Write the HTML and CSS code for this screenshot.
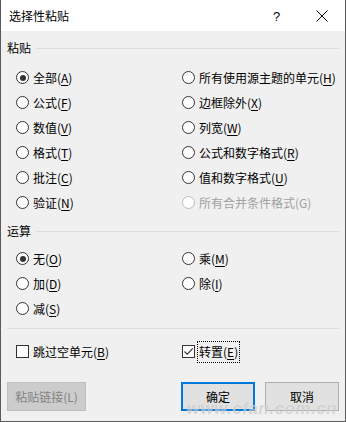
FILE: index.html
```html
<!DOCTYPE html>
<html lang="zh-CN">
<head>
<meta charset="utf-8">
<title>选择性粘贴</title>
<link rel="stylesheet" href="styles.css">
</head>
<body>
<div class="dialog">
  <div class="titlebar">
    <span class="title">选择性粘贴</span>
    <span class="help">?</span>
    <span class="close"><svg width="12" height="12" viewBox="0 0 12 12"><path d="M0.5 0.5 L11.5 11.5 M11.5 0.5 L0.5 11.5" stroke="#000" stroke-width="1" fill="none"/></svg></span>
  </div>
  <div class="content">
    <div class="group-head"><span>粘贴</span><i class="rule"></i></div>
    <div class="opts paste">
      <label class="opt"><span class="radio on"></span>全部(<u>A</u>)</label>
      <label class="opt"><span class="radio"></span>所有使用源主题的单元(<u>H</u>)</label>
      <label class="opt"><span class="radio"></span>公式(<u>F</u>)</label>
      <label class="opt"><span class="radio"></span>边框除外(<u>X</u>)</label>
      <label class="opt"><span class="radio"></span>数值(<u>V</u>)</label>
      <label class="opt"><span class="radio"></span>列宽(<u>W</u>)</label>
      <label class="opt"><span class="radio"></span>格式(<u>T</u>)</label>
      <label class="opt"><span class="radio"></span>公式和数字格式(<u>R</u>)</label>
      <label class="opt"><span class="radio"></span>批注(<u>C</u>)</label>
      <label class="opt"><span class="radio"></span>值和数字格式(<u>U</u>)</label>
      <label class="opt"><span class="radio"></span>验证(<u>N</u>)</label>
      <label class="opt disabled"><span class="radio"></span>所有合并条件格式(G)</label>
    </div>
    <div class="group-head op-head"><span>运算</span><i class="rule"></i></div>
    <div class="opts ops">
      <label class="opt"><span class="radio on"></span>无(<u>O</u>)</label>
      <label class="opt"><span class="radio"></span>乘(<u>M</u>)</label>
      <label class="opt"><span class="radio"></span>加(<u>D</u>)</label>
      <label class="opt"><span class="radio"></span>除(<u>I</u>)</label>
      <label class="opt"><span class="radio"></span>减(<u>S</u>)</label>
    </div>
    <div class="sep"></div>
    <div class="opts checks">
      <label class="opt"><span class="check"></span>跳过空单元(<u>B</u>)</label>
      <label class="opt"><span class="check tight"><svg width="11" height="11" viewBox="0 0 11 11"><path d="M1.5 5.5 L4.2 8.2 L9.8 2.4" stroke="#333" stroke-width="1.1" fill="none"/></svg></span><span class="focus">转置(<u>E</u>)</span></label>
    </div>
    <div class="footer">
      <button class="btn link" disabled>粘贴链接(L)</button>
      <span class="spacer"></span>
      <button class="btn ok">确定</button>
      <button class="btn cancel">取消</button>
    </div>
  </div>
  <div class="watermark">www.cfan.com.cn</div>
</div>
</body>
</html>
```
FILE: styles.css
```css
* { box-sizing: border-box; }
html, body { margin: 0; padding: 0; }
body {
  width: 346px;
  height: 422px;
  overflow: hidden;
  font-family: "Noto Sans CJK SC", "Microsoft YaHei", sans-serif;
  font-size: 12px;
  color: #000;
  background: #f0f0f0;
}
.dialog {
  position: relative;
  width: 346px;
  height: 422px;
  border-left: 1px solid #5a5a5a;
  border-right: 1px solid #5a5a5a;
  border-bottom: 1px solid #5a5a5a;
  background: #f0f0f0;
  display: flex;
  flex-direction: column;
}
.titlebar {
  height: 31px;
  background: #fff;
  display: flex;
  align-items: center;
  padding-left: 8px;
  flex: none;
}
.title { font-size: 12px; line-height: 16px; flex: 1; padding-top: 1px; }
.help {
  font-family: "Liberation Sans", sans-serif;
  font-size: 13px;
  width: 10px;
  margin-right: 33px;
  padding-top: 1px;
}
.close { width: 12px; height: 12px; margin-right: 17px; display: flex; }
.content { display: flex; flex-direction: column; flex: 1; }
.group-head {
  display: flex;
  align-items: center;
  height: 16px;
  line-height: 16px;
  margin-top: 9px;
  padding: 0 6px 0 6px;
}
.group-head .rule {
  flex: 1;
  height: 1px;
  background: #dcdcdc;
  margin-left: 5px;
}
.op-head { margin-top: 8px; }
.opts {
  display: grid;
  grid-template-columns: 166px 1fr;
  grid-auto-rows: 25px;
  padding-left: 15px;
  margin-top: 9px;
}
.ops { margin-top: 7px; }
.opt {
  display: flex;
  align-items: center;
  white-space: nowrap;
  line-height: 16px;
}
.opt u { text-decoration: underline; text-underline-offset: 2px; }
.radio {
  width: 13px;
  height: 13px;
  border: 1px solid #333;
  border-radius: 50%;
  background: #fff;
  margin-right: 4px;
  display: flex;
  align-items: center;
  justify-content: center;
  flex: none;
}
.radio.on::after {
  content: "";
  width: 6px;
  height: 6px;
  border-radius: 50%;
  background: #333;
}
.opt.disabled { color: #a0a0a0; }
.opt.disabled .radio { border-color: #bcbcbc; }
.sep {
  height: 1px;
  background: #dcdcdc;
  margin: 7px 6px 0 6px;
}
.checks { margin-top: 10px; }
.check {
  width: 13px;
  height: 13px;
  border: 1px solid #333;
  background: #fff;
  margin-right: 4px;
  display: flex;
  align-items: center;
  justify-content: center;
  flex: none;
}
.check.tight { margin-right: 2px; }
.focus {
  border: 1px dotted #000;
  padding: 2px 1px 2px 1px;
}
.footer {
  display: flex;
  align-items: center;
  gap: 10px;
  padding: 0 6px;
  margin-top: 18px;
}
.spacer { flex: 1; }
.btn {
  font-family: "Noto Sans CJK SC", "Microsoft YaHei", sans-serif;
  font-size: 12px;
  height: 29px;
  padding: 0;
  background: #e1e1e1;
  border: 1px solid #adadad;
  color: #000;
  line-height: 16px;
}
.btn.link { width: 79px; background: #cccccc; border-color: #bfbfbf; color: #838383; }
.btn.ok { width: 74px; border: 2px solid #0078d7; }
.btn.cancel { width: 74px; }
.watermark {
  position: absolute;
  right: 8px;
  bottom: 2px;
  font-family: "Liberation Sans", sans-serif;
  font-style: italic;
  font-weight: bold;
  font-size: 17px;
  letter-spacing: 0.5px;
  color: rgba(170, 170, 170, 0.45);
  text-shadow: 0 0 1px rgba(255,255,255,0.6);
  pointer-events: none;
}
```
